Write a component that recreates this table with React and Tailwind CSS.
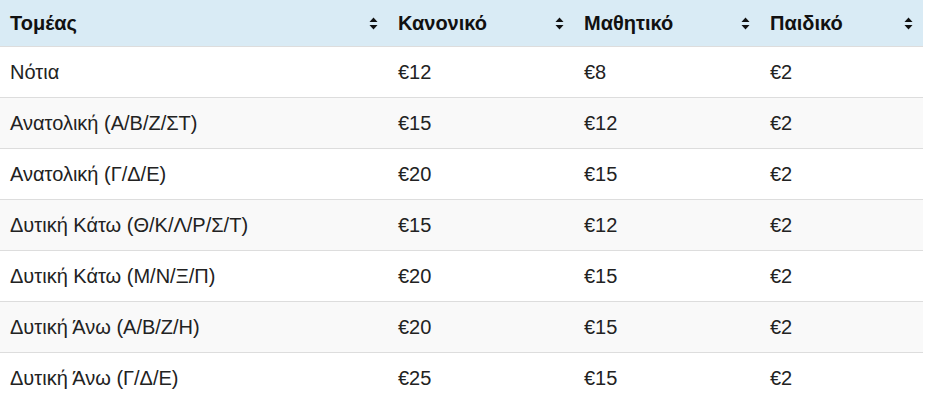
const columns = ["Τομέας", "Κανονικό", "Μαθητικό", "Παιδικό"];

const rows = [
  ["Νότια", "€12", "€8", "€2"],
  ["Ανατολική (Α/Β/Ζ/ΣΤ)", "€15", "€12", "€2"],
  ["Ανατολική (Γ/Δ/Ε)", "€20", "€15", "€2"],
  ["Δυτική Κάτω (Θ/Κ/Λ/Ρ/Σ/Τ)", "€15", "€12", "€2"],
  ["Δυτική Κάτω (Μ/Ν/Ξ/Π)", "€20", "€15", "€2"],
  ["Δυτική Άνω (Α/Β/Ζ/Η)", "€20", "€15", "€2"],
  ["Δυτική Άνω (Γ/Δ/Ε)", "€25", "€15", "€2"],
];

function SortIcon() {
  return (
    <svg width="9" height="13" viewBox="0 0 9 13" className="shrink-0">
      <path d="M4.5 0.5 L8.5 5 L0.5 5 Z" fill="#111" />
      <path d="M4.5 12.5 L8.5 8 L0.5 8 Z" fill="#111" />
    </svg>
  );
}

const grid = "grid grid-cols-[388px_186px_186px_163px]";

export default function App() {
  return (
    <div className="w-[933px] h-[402px] bg-white overflow-hidden font-['Liberation_Sans',Arial,sans-serif] text-[20px]">
      <div className="w-[923px]">
        <div className={`${grid} h-[46px] bg-[#d9ebf5]`}>
          {columns.map((c) => (
            <div key={c} className="flex items-center justify-between pl-[10px] pr-[10px] font-bold text-[#111]">
              <span>{c}</span>
              <SortIcon />
            </div>
          ))}
        </div>
        {rows.map((row, i) => (
          <div
            key={row[0]}
            className={`${grid} h-[51px] border-t border-[#dddddd] ${i % 2 === 1 ? "bg-[#f9f9f9]" : "bg-white"}`}
          >
            {row.map((cell, j) => (
              <div key={j} className="flex items-center pl-[10px] text-[#222]">
                {cell}
              </div>
            ))}
          </div>
        ))}
      </div>
    </div>
  );
}
